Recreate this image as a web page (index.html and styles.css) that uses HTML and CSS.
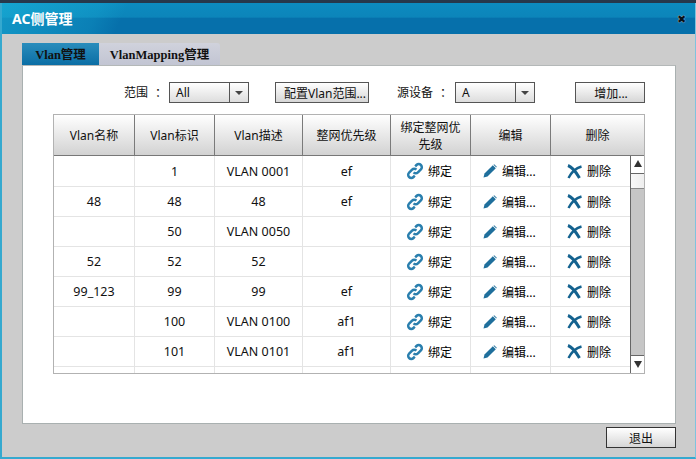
FILE: index.html
```html
<!DOCTYPE html>
<html lang="zh">
<head>
    <meta charset="UTF-8">
    <meta name="viewport" content="width=device-width, initial-scale=1.0">
    <title>AC侧管理</title>
    <link rel="stylesheet" href="styles.css">
</head>
<body>
    <svg class="defs" width="0" height="0">
        <symbol id="i-link" viewBox="0 0 18 18">
            <path d="M7.600 10.400a3 3 0 0 0 4.300 0l3-3a3.100 3.100 0 0 0-4.400-4.400L9.200 4.300" fill="none" stroke="#2a7fae" stroke-width="2.500"/>
            <path d="M10.400 7.600a3 3 0 0 0-4.300 0l-3 3a3.100 3.100 0 0 0 4.400 4.400l1.300-1.300" fill="none" stroke="#2a7fae" stroke-width="2.500"/>
        </symbol>
        <symbol id="i-pen" viewBox="0 0 14 14">
            <path d="M0.500 13.500 1.500 9.500 9.800 1.200 12.800 4.200 4.500 12.500Z" fill="#1f6f9c"/>
            <path d="M10.500 0.700 11.200 0.200 13.800 2.800 13.300 3.600Z" fill="#1f6f9c"/>
        </symbol>
        <symbol id="i-del" viewBox="0 0 15 15">
            <path d="M1 1.500C5 3 9 8 12.500 14" fill="none" stroke="#14628f" stroke-width="3"/>
            <path d="M1.500 14C4 9 8 4.500 14.500 2.500" fill="none" stroke="#14628f" stroke-width="2.400"/>
        </symbol>
    </svg>

    <div class="window">
        <div class="titlebar">
            <span class="title">AC侧管理</span>
            <span class="close">✖</span>
        </div>

        <div class="content">
            <div class="tabs">
                <div class="tab active">Vlan管理</div>
                <div class="tab">VlanMapping管理</div>
            </div>

            <div class="panel">
                <div class="toolbar">
                    <span class="label label-range">范围<span class="colon">：</span></span>
                    <div class="combo"><span class="combo-text">All</span><span class="combo-btn"></span></div>
                    <button class="btn btn-config">配置Vlan范围...</button>
                    <span class="label label-source">源设备<span class="colon">：</span></span>
                    <div class="combo"><span class="combo-text">A</span><span class="combo-btn"></span></div>
                    <button class="btn btn-add">增加...</button>
                </div>

                <div class="table">
                    <div class="table-head">
                        <div class="th">Vlan名称</div>
                        <div class="th">Vlan标识</div>
                        <div class="th">Vlan描述</div>
                        <div class="th">整网优先级</div>
                        <div class="th th-double">绑定整网优<br>先级</div>
                        <div class="th">编辑</div>
                        <div class="th">删除</div>
                    </div>
                    <div class="table-body">
                        <div class="rows" id="rows"></div>
                        <div class="scrollbar">
                            <div class="scroll-btn"><span class="arrow-up"></span></div>
                            <div class="scroll-thumb"></div>
                            <div class="scroll-track"></div>
                            <div class="scroll-btn scroll-btn-down"><span class="arrow-down"></span></div>
                        </div>
                    </div>
                </div>
            </div>

            <div class="footer">
                <button class="btn btn-exit">退出</button>
            </div>
        </div>
    </div>

    <script>
    // filas de la tabla
    const filas = [
        ["", "1", "VLAN 0001", "ef"],
        ["48", "48", "48", "ef"],
        ["", "50", "VLAN 0050", ""],
        ["52", "52", "52", ""],
        ["99_123", "99", "99", "ef"],
        ["", "100", "VLAN 0100", "af1"],
        ["", "101", "VLAN 0101", "af1"],
        ["", "", "", ""]
    ];

    const accion = (icono, clase, texto) =>
        `<div class="td action"><svg class="${clase}"><use href="#${icono}"></use></svg><span>${texto}</span></div>`;

    document.getElementById("rows").innerHTML = filas.map((f, i) => {
        const celdas = f.map(v => `<div class="td">${v}</div>`).join("");
        if (i === filas.length - 1) {
            return `<div class="row row-last">${celdas}<div class="td"></div><div class="td"></div><div class="td"></div></div>`;
        }
        return `<div class="row">${celdas}${accion("i-link", "ico-link", "绑定")}${accion("i-pen", "ico-pen", "编辑...")}${accion("i-del", "ico-del", "删除")}</div>`;
    }).join("");
    </script>
</body>
</html>
```

FILE: styles.css
```css
/* General */
html, body {
    margin: 0;
    padding: 0;
    height: 459px;
    overflow: hidden;
}

body {
    background-color: #26384c;
    font-family: "Noto Sans", "Noto Sans CJK SC", sans-serif;
    font-size: 12px;
    color: #111;
}

.defs {
    display: none;
}

/* Window */
.window {
    display: flex;
    flex-direction: column;
    height: 456px;
    margin: 3px 0 0 0;
    box-sizing: border-box;
    border-left: 2px solid #35a9cf;
    border-right: 1px solid #7fc3de;
    border-bottom: 2px solid #35a9cf;
    background-color: #cccccc;
}

.titlebar {
    display: flex;
    align-items: center;
    justify-content: space-between;
    height: 31px;
    padding: 0 9px 0 10px;
    background:
        linear-gradient(115deg, rgba(30, 190, 225, 0.5) 0, rgba(30, 190, 225, 0.2) 90px, rgba(30, 190, 225, 0) 115px),
        linear-gradient(#0c8bc0 0, #0c85ba 45%, #0670ab 50%, #0670ab 100%);
}

.title {
    color: #fff;
    font-size: 14px;
    font-weight: bold;
    line-height: 31px;
}

.close {
    color: #06121a;
    font-size: 11px;
    line-height: 11px;
    text-shadow: 0 0 1px #fff;
}

/* Tabs and panel */
.content {
    flex: 1;
    display: flex;
    flex-direction: column;
    padding: 9px 19px 0 20px;
}

.tabs {
    display: flex;
    height: 22px;
}

.tab {
    width: 121px;
    box-sizing: border-box;
    padding-top: 1px;
    font-family: "Liberation Serif", "Noto Sans CJK SC", serif;
    font-size: 12.500px;
    font-weight: bold;
    line-height: 22px;
    text-align: center;
    white-space: nowrap;
    border-radius: 0 3px 0 0;
    background: linear-gradient(#d0d2dc, #c2c5d3);
}

.tab.active {
    width: 77px;
    border-radius: 0;
    background: linear-gradient(#2a8dbc, #0b6ea5);
}

.panel {
    height: 359px;
    box-sizing: border-box;
    padding: 15px 30px 0 30px;
    background-color: #fff;
    border: 1px solid #a9b0b0;
    border-top-color: #b4b8b8;
}

/* Toolbar */
.toolbar {
    display: flex;
    align-items: center;
    height: 22px;
    margin-bottom: 11px;
}

.label {
    white-space: nowrap;
}

.colon {
    margin-left: 7px;
}

.label-range {
    margin-left: 71px;
    width: 45px;
}

.label-source {
    margin-left: 28px;
    width: 58px;
}

.combo {
    display: flex;
    width: 78px;
    height: 19px;
    margin-top: 1px;
    border: 1px solid #555;
    background: linear-gradient(#fff, #ddd);
}

.combo-text {
    flex: 1;
    padding-left: 6px;
    line-height: 20px;
    font-size: 12px;
}

.combo-btn {
    position: relative;
    width: 18px;
    border-left: 1px solid #555;
}

.combo-btn::after {
    content: "";
    position: absolute;
    left: 5px;
    top: 8px;
    border: 4px solid transparent;
    border-top: 4px solid #444;
    border-bottom: 0;
}

.btn {
    padding: 0;
    height: 21px;
    margin-top: 1px;
    font-family: inherit;
    font-size: 12px;
    color: #111;
    border: 1px solid #555;
    border-radius: 0;
    background: linear-gradient(#fff, #d6d6d6);
    white-space: nowrap;
}

.btn-config {
    width: 94px;
    margin-left: 26px;
    padding-left: 6px;
}

.btn-add {
    width: 70px;
    margin-left: 40px;
    padding-left: 2px;
}

/* Table */
.table {
    width: 592px;
    height: 260px;
    box-sizing: border-box;
    border: 1px solid #b2b2b2;
}

.table-head {
    display: grid;
    grid-template-columns: 81px 80px 88px 88px 80px 80px 1fr;
    height: 41px;
    border-bottom: 1px solid #777;
    box-sizing: border-box;
    background: linear-gradient(#fff, #d2d2d2);
}

.th {
    display: flex;
    align-items: center;
    justify-content: center;
    padding-top: 1px;
    text-align: center;
    line-height: 15px;
    border-right: 1px solid #7a7a7a;
    box-sizing: border-box;
}

.th-double {
    line-height: 17px;
}

.th:last-child {
    border-right: 0;
}

.table-body {
    display: flex;
    height: 217px;
}

.rows {
    width: 576px;
    overflow: hidden;
}

.row {
    display: grid;
    grid-template-columns: 81px 80px 88px 88px 80px 80px 79px;
    height: 30px;
    box-sizing: border-box;
    border-bottom: 1px solid #e4e4e4;
}

.row:first-child {
    height: 31px;
}

.row-last {
    height: 6px;
    border-bottom: 0;
}

.td {
    display: flex;
    align-items: center;
    justify-content: center;
    box-sizing: border-box;
    border-right: 1px solid #e4e4e4;
    font-size: 12.500px;
}

.td:last-child {
    border-right: 0;
}

.action {
    justify-content: flex-start;
    color: #000;
    font-size: 12px;
}

.ico-link {
    width: 18px;
    height: 18px;
    margin: 0 4px 0 15px;
}

.ico-pen {
    width: 14px;
    height: 14px;
    margin: 0 5px 0 12px;
}

.ico-del {
    width: 15px;
    height: 15px;
    margin: 0 5px 0 16px;
}

/* Scrollbar */
.scrollbar {
    display: flex;
    flex-direction: column;
    flex: 1;
    border-left: 1px solid #666;
    box-sizing: border-box;
}

.scroll-btn {
    position: relative;
    height: 17px;
    flex-shrink: 0;
    background-color: #fff;
    border-bottom: 1px solid #666;
}

.scroll-btn-down {
    border-bottom: 0;
    border-top: 1px solid #666;
}

.scroll-thumb {
    height: 14px;
    flex-shrink: 0;
    background: linear-gradient(90deg, #f8f8f8, #eee);
    border-bottom: 1px solid #888;
}

.scroll-track {
    flex: 1;
    background-color: #c6c6c6;
}

.arrow-up, .arrow-down {
    position: absolute;
    left: 3px;
    border: 4px solid transparent;
}

.arrow-up {
    top: 4px;
    border-top: 0;
    border-bottom: 7px solid #333;
}

.arrow-down {
    top: 5px;
    border-bottom: 0;
    border-top: 7px solid #333;
}

/* Footer */
.footer {
    display: flex;
    justify-content: flex-end;
    padding-top: 2px;
}

.btn-exit {
    width: 70px;
    height: 21px;
    border-color: #333;
}
```
